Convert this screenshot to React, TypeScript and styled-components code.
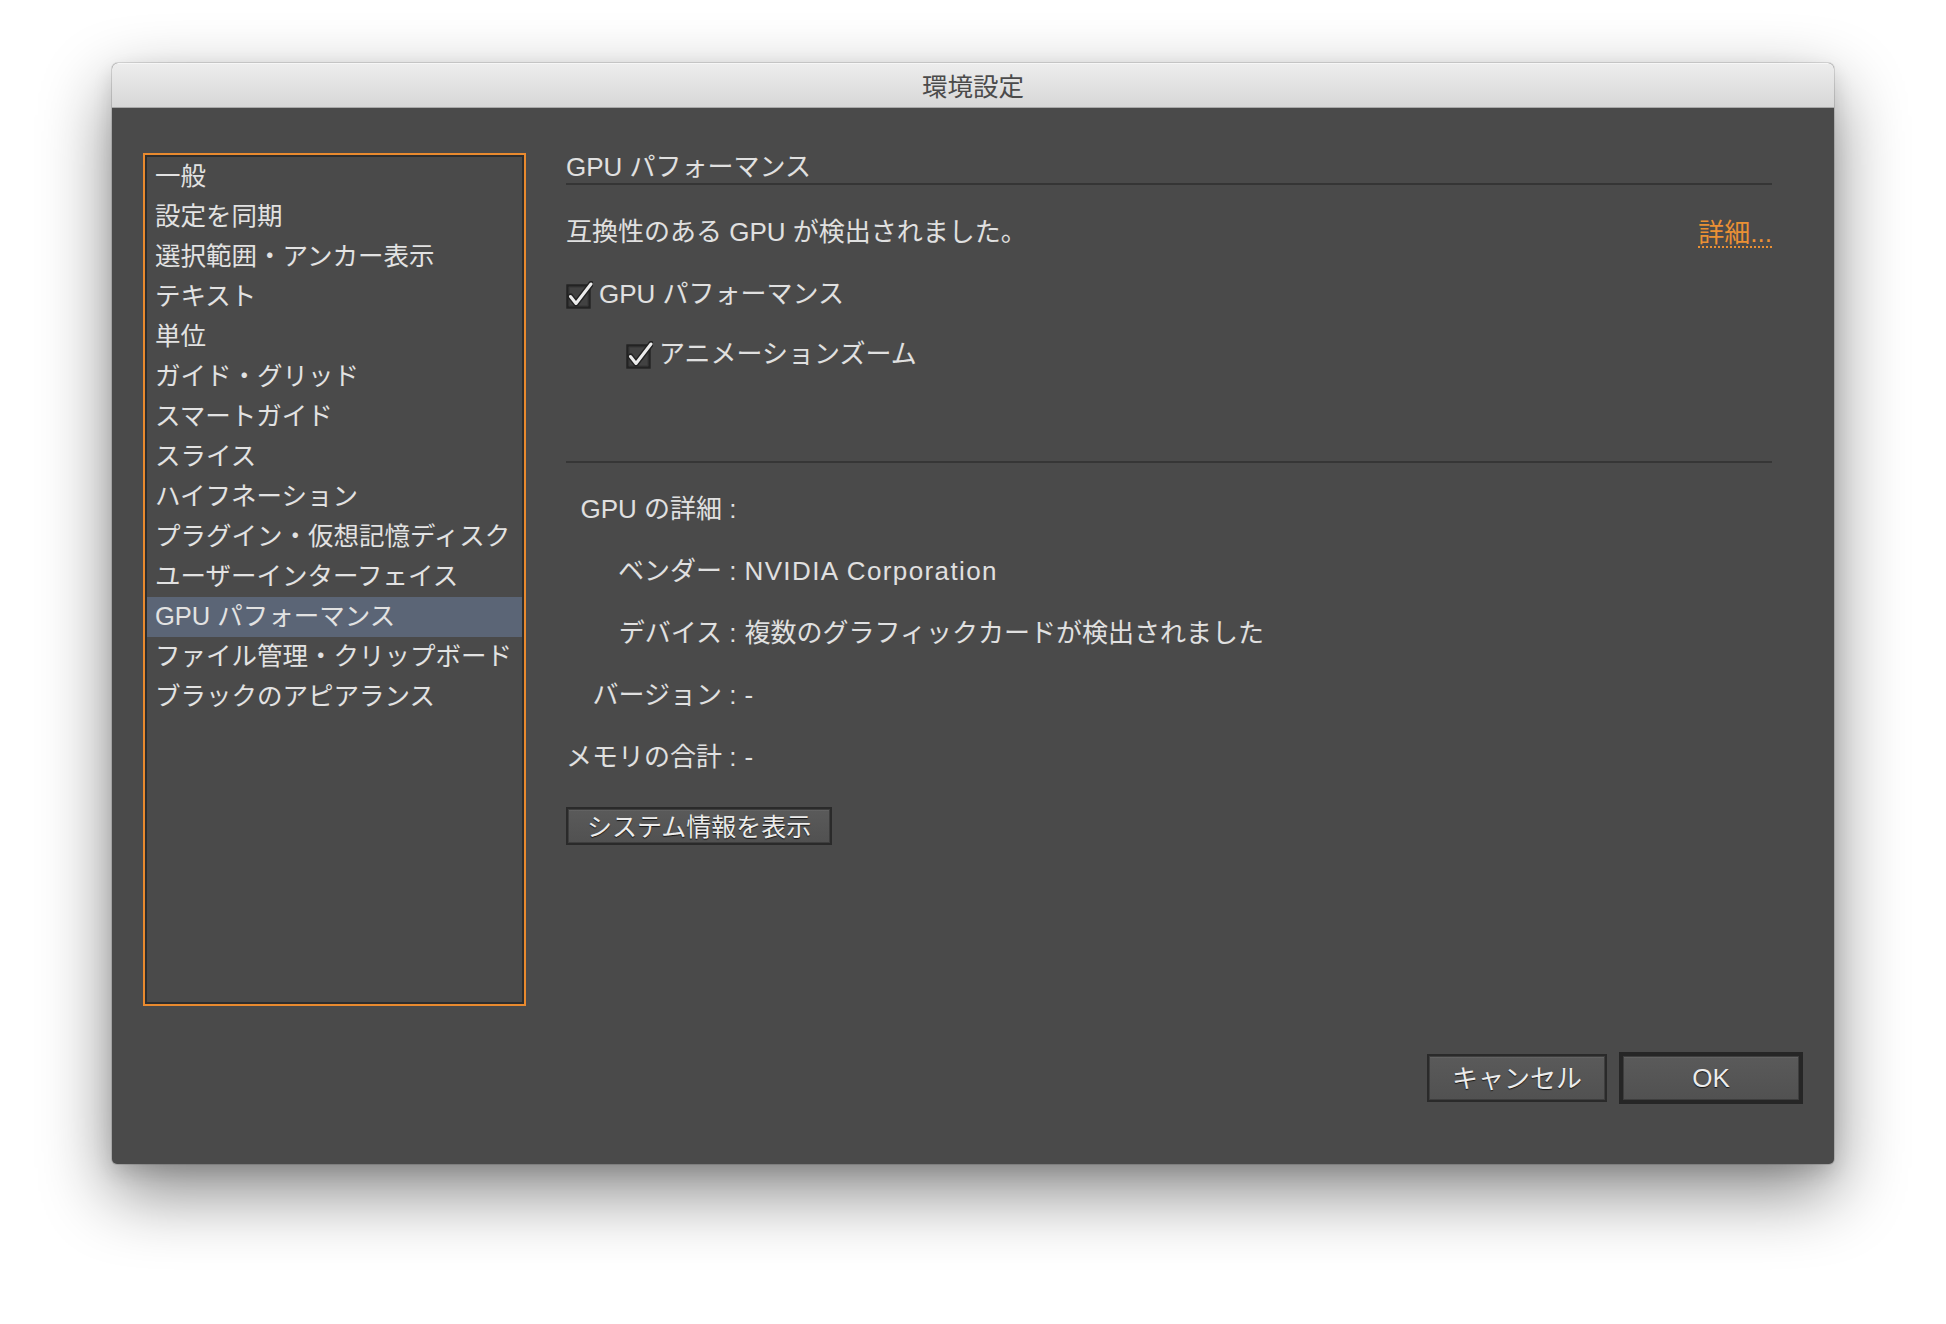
import React from "react";
import styled, { createGlobalStyle } from "styled-components";

const Global = createGlobalStyle`
  html, body { margin: 0; padding: 0; background: #ffffff; }
  body {
    font-family: "Liberation Sans", "Noto Sans CJK JP", sans-serif;
    -webkit-font-smoothing: antialiased;
  }
  * { box-sizing: border-box; }
`;

const Page = styled.div`
  width: 1946px;
  height: 1324px;
  padding: 63px 0 0 112px;
  background: #ffffff;
  overflow: hidden;
`;

const Window = styled.div`
  width: 1722px;
  height: 1101px;
  display: flex;
  flex-direction: column;
  background: #4a4a4a;
  border-radius: 6px 6px 5px 5px;
  overflow: hidden;
  box-shadow: 0 0 0 1px rgba(0, 0, 0, 0.12), 0 28px 70px rgba(0, 0, 0, 0.48),
    0 8px 20px rgba(0, 0, 0, 0.12);
`;

const TitleBar = styled.div`
  height: 45px;
  flex: 0 0 45px;
  display: flex;
  align-items: center;
  justify-content: center;
  padding-bottom: 2px;
  background: linear-gradient(#ededed, #d7d7d7);
  border-top: 1px solid #f6f6f6;
  border-bottom: 1px solid #a9a9a9;
  color: #4b4b4b;
  font-size: 25.5px;
  font-family: "Noto Sans CJK JP", sans-serif;
`;

const Body = styled.div`
  flex: 1;
  display: flex;
  flex-direction: column;
  padding: 45px 31px 0 31px;
`;

const Main = styled.div`
  display: flex;
  gap: 40px;
`;

const CategoryList = styled.ul`
  list-style: none;
  margin: 0;
  width: 383px;
  height: 853px;
  border: 2px solid #e98a2f;
  box-shadow: inset 0 0 0 2px #2e2e2e;
  padding: 2px 2px;
`;

const CategoryItem = styled.li<{ $selected?: boolean }>`
  height: 40px;
  line-height: 38px;
  padding-left: 8px;
  font-size: 25.5px;
  color: #e2e2e2;
  white-space: nowrap;
  background: ${(p) => (p.$selected ? "#5b6576" : "transparent")};
`;

const Panel = styled.div`
  flex: 1;
  padding-right: 31px;
  color: #e0e0e0;
  font-size: 26px;
`;

const SectionHeader = styled.div`
  margin-top: -2px;
  height: 34px;
  line-height: 32px;
  padding-bottom: 2px;
  border-bottom: 2px solid #353535;
  white-space: nowrap;
`;

const StatusRow = styled.div`
  margin-top: 32px;
  height: 30px;
  line-height: 30px;
  display: flex;
  justify-content: space-between;
  align-items: center;
`;

const DetailLink = styled.span`
  color: #eb9034;
  line-height: 26px;
  border-bottom: 2px dotted #eb9034;
  margin-top: 4px;
`;

const CheckRow = styled.label<{ $indent?: number; $gap: number }>`
  margin-top: ${(p) => p.$gap}px;
  margin-left: ${(p) => p.$indent ?? 0}px;
  height: 30px;
  line-height: 30px;
  display: flex;
  align-items: center;
  gap: 6px;
  white-space: nowrap;
`;

const CheckBoxIcon = styled.svg`
  flex: 0 0 27px;
  margin-top: 2px;
`;

const Divider = styled.div`
  margin-top: 92px;
  height: 2px;
  background: #363636;
`;

const DetailGrid = styled.div`
  margin-top: 31px;
  display: grid;
  grid-template-columns: max-content 1fr;
  column-gap: 8px;
  row-gap: 32px;
`;

const DetailLabel = styled.div`
  justify-self: end;
  height: 30px;
  line-height: 30px;
  white-space: nowrap;
`;

const DetailValue = styled.div<{ $latin?: boolean }>`
  height: 30px;
  line-height: 30px;
  white-space: nowrap;
  letter-spacing: ${(p) => (p.$latin ? "1.4px" : "0")};
`;

const DarkButton = styled.button<{ $default?: boolean }>`
  height: ${(p) => (p.$default ? 52 : 48)}px;
  padding: 0;
  font-family: "Liberation Sans", "Noto Sans CJK JP", sans-serif;
  font-size: 26px;
  color: #ececec;
  text-shadow: 0 1px 1px rgba(0, 0, 0, 0.75);
  background: linear-gradient(#5a5a5a, #515151);
  border: ${(p) => (p.$default ? "4px solid #262626" : "2px solid #2a2a2a")};
  box-shadow: inset 0 0 0 1px #3e3e3e, inset 0 2px 0 rgba(255, 255, 255, 0.06);
  display: flex;
  align-items: center;
  justify-content: center;
  cursor: default;
`;

const SystemInfoButton = styled(DarkButton)`
  margin-top: 35px;
  height: 38px;
  padding: 0 19px 2px;
  font-size: 25px;
`;

const Footer = styled.div`
  margin-top: 46px;
  display: flex;
  justify-content: flex-end;
  align-items: center;
  gap: 12px;
`;

const CancelButton = styled(DarkButton)`
  width: 180px;
  padding-bottom: 3px;
`;

const OkButton = styled(DarkButton)`
  width: 184px;
`;

const categories = [
  "一般",
  "設定を同期",
  "選択範囲・アンカー表示",
  "テキスト",
  "単位",
  "ガイド・グリッド",
  "スマートガイド",
  "スライス",
  "ハイフネーション",
  "プラグイン・仮想記憶ディスク",
  "ユーザーインターフェイス",
  "GPU パフォーマンス",
  "ファイル管理・クリップボード",
  "ブラックのアピアランス",
];

const details: [string, string, boolean][] = [
  ["GPU の詳細 :", "", false],
  ["ベンダー :", "NVIDIA Corporation", true],
  ["デバイス :", "複数のグラフィックカードが検出されました", false],
  ["バージョン :", "-", false],
  ["メモリの合計 :", "-", false],
];

function CheckBox() {
  return (
    <CheckBoxIcon width="27" height="28" viewBox="0 0 27 28">
      <rect x="1.5" y="4.5" width="22" height="22" fill="#424242" stroke="#232323" strokeWidth="2.4" />
      <rect x="3.2" y="6.2" width="18.6" height="18.6" fill="none" stroke="#393939" strokeWidth="1" />
      <path d="M4.5 15.5 L10 22.5 L25 3" fill="none" stroke="#222" strokeWidth="6" strokeLinecap="round" strokeLinejoin="round" />
      <path d="M4.5 15.5 L10 22.5 L25 3" fill="none" stroke="#ececec" strokeWidth="3" strokeLinecap="round" strokeLinejoin="round" />
    </CheckBoxIcon>
  );
}

export default function App() {
  return (
    <>
      <Global />
      <Page>
        <Window>
          <TitleBar>環境設定</TitleBar>
          <Body>
            <Main>
              <CategoryList>
                {categories.map((c) => (
                  <CategoryItem key={c} $selected={c === "GPU パフォーマンス"}>
                    {c}
                  </CategoryItem>
                ))}
              </CategoryList>
              <Panel>
                <SectionHeader>GPU パフォーマンス</SectionHeader>
                <StatusRow>
                  <span>互換性のある GPU が検出されました。</span>
                  <DetailLink>詳細...</DetailLink>
                </StatusRow>
                <CheckRow $gap={32}>
                  <CheckBox />
                  <span>GPU パフォーマンス</span>
                </CheckRow>
                <CheckRow $gap={30} $indent={60}>
                  <CheckBox />
                  <span>アニメーションズーム</span>
                </CheckRow>
                <Divider />
                <DetailGrid>
                  {details.map(([label, value, latin]) => (
                    <React.Fragment key={label}>
                      <DetailLabel>{label}</DetailLabel>
                      <DetailValue $latin={latin}>{value}</DetailValue>
                    </React.Fragment>
                  ))}
                </DetailGrid>
                <SystemInfoButton>システム情報を表示</SystemInfoButton>
              </Panel>
            </Main>
            <Footer>
              <CancelButton>キャンセル</CancelButton>
              <OkButton $default>OK</OkButton>
            </Footer>
          </Body>
        </Window>
      </Page>
    </>
  );
}
